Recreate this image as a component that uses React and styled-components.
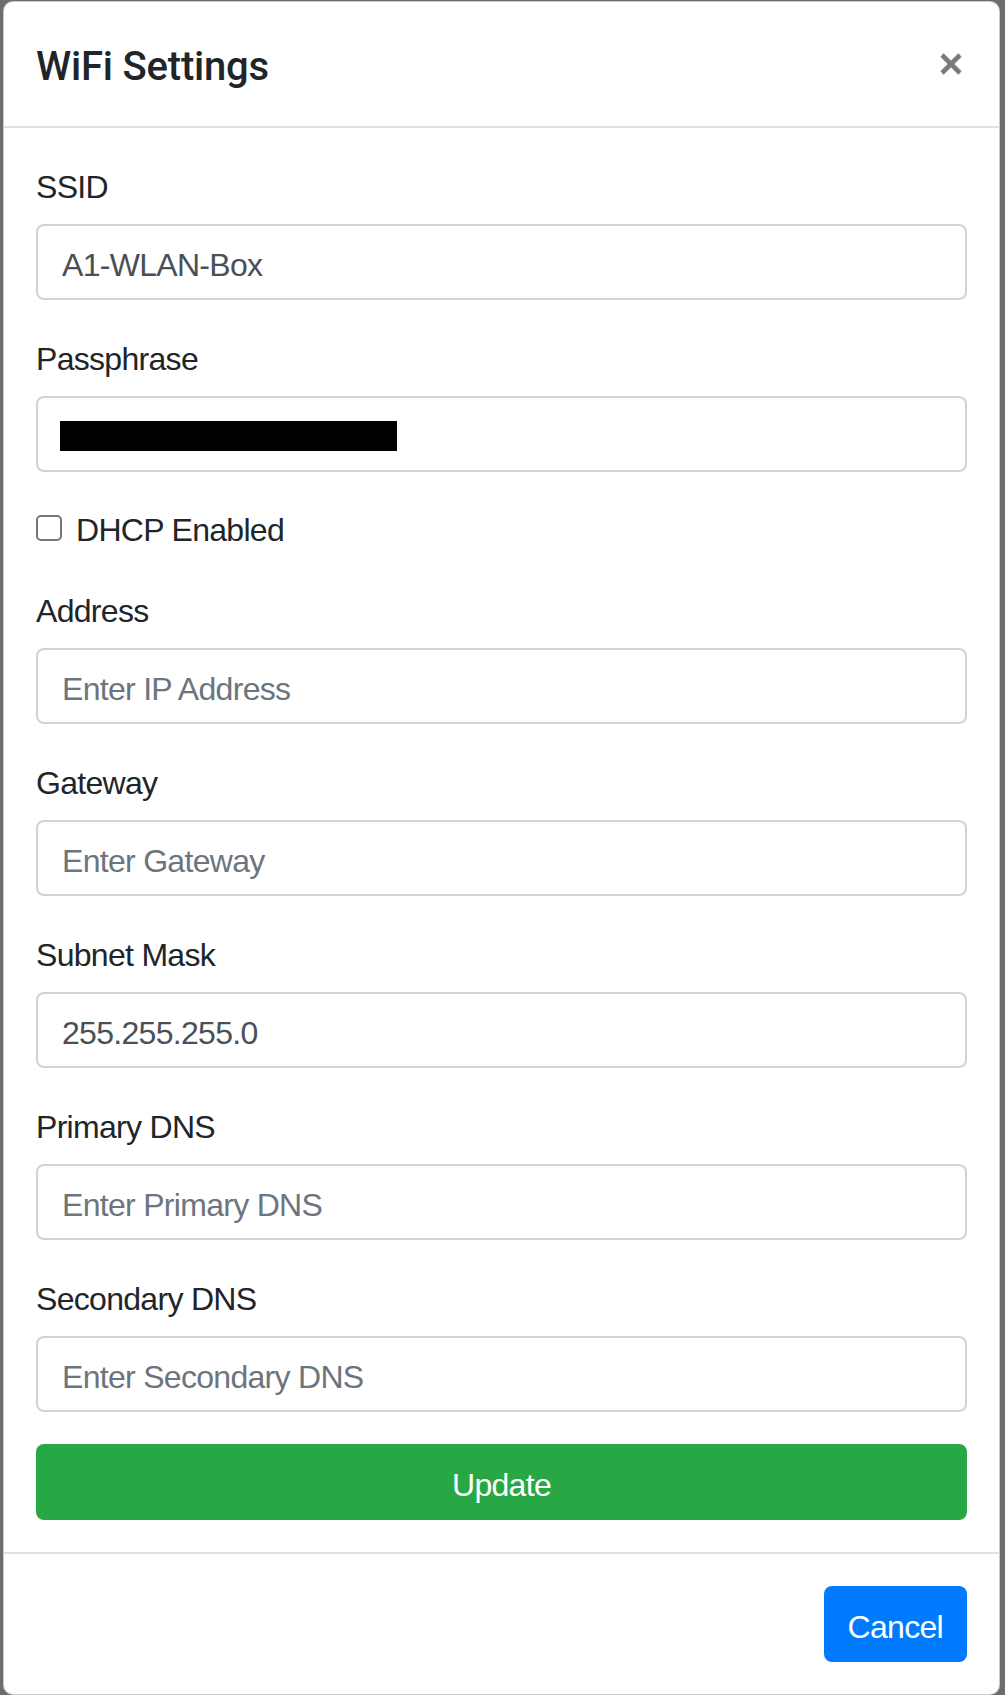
import React from 'react'
import styled, { createGlobalStyle } from 'styled-components'

const GlobalStyle = createGlobalStyle`
  html, body {
    margin: 0;
    padding: 0;
    background: #6d6d6d;
  }
  body {
    font-family: "Liberation Sans", Arial, sans-serif;
    color: #212529;
  }
  * {
    box-sizing: border-box;
  }
`

const Modal = styled.div`
  margin: 1px 0 0 3px;
  width: 997px;
  background: #ffffff;
  border: 1px solid rgba(0, 0, 0, 0.2);
  border-radius: 10px;
  display: flex;
  flex-direction: column;
`

const Header = styled.div`
  display: flex;
  align-items: center;
  justify-content: space-between;
  padding: 32px;
  border-bottom: 2px solid #dee2e6;
`

const Title = styled.h5`
  margin: 0;
  padding-top: 5px;
  height: 60px;
  font-family: Roboto, "Liberation Sans", sans-serif;
  font-size: 40px;
  line-height: 55px;
  font-weight: 500;
  letter-spacing: -0.2px;
  color: #212529;
`

const CloseButton = styled.button`
  display: flex;
  padding: 0;
  margin-right: 5px;
  border: 0;
  background: transparent;
  cursor: pointer;
`

const Body = styled.div`
  padding: 32px;
  display: flex;
  flex-direction: column;
`

const Group = styled.div`
  margin-bottom: 32px;
`

const Label = styled.label`
  display: block;
  padding-top: 3px;
  margin-bottom: 13px;
  font-size: 32px;
  line-height: 48px;
  letter-spacing: -0.7px;
  color: #212529;
`

const Input = styled.input`
  display: block;
  width: 100%;
  height: 76px;
  padding: 15px 24px 9px;
  font-family: inherit;
  font-size: 32px;
  line-height: 48px;
  letter-spacing: -0.7px;
  color: #495057;
  background: #ffffff;
  border: 2px solid #ced4da;
  border-radius: 8px;
  outline: none;

  &::placeholder {
    color: #6c757d;
    opacity: 1;
  }
`

const SecretField = styled.div`
  display: flex;
  align-items: center;
  height: 76px;
  padding: 3px 22px 0;
  border: 2px solid #ced4da;
  border-radius: 8px;
`

const Redaction = styled.span`
  display: block;
  width: 337px;
  height: 30px;
  background: #000000;
`

const CheckRow = styled.div`
  display: flex;
  align-items: center;
  gap: 14px;
  height: 48px;
  margin-bottom: 32px;
`

const Checkbox = styled.span`
  display: block;
  width: 26px;
  height: 26px;
  border: 2px solid #767676;
  border-radius: 5px;
  background: #ffffff;
`

const CheckLabel = styled.label`
  padding-top: 4px;
  font-size: 32px;
  line-height: 44px;
  letter-spacing: -0.7px;
  color: #212529;
`

const Button = styled.button`
  height: 76px;
  padding: 15px 24px 9px;
  border: 0;
  border-radius: 8px;
  font-family: inherit;
  font-size: 32px;
  line-height: 48px;
  letter-spacing: -0.7px;
  color: #ffffff;
  background: ${({ $variant }) => ($variant === 'success' ? '#28a745' : '#007bff')};
  width: ${({ $block }) => ($block ? '100%' : 'auto')};
  cursor: pointer;
`

const Footer = styled.div`
  display: flex;
  justify-content: flex-end;
  padding: 24px;
  border-top: 2px solid #dee2e6;

  & > ${Button} {
    margin: 8px;
  }
`

const fields = [
  { label: 'Address', placeholder: 'Enter IP Address' },
  { label: 'Gateway', placeholder: 'Enter Gateway' },
  { label: 'Subnet Mask', value: '255.255.255.0' },
  { label: 'Primary DNS', placeholder: 'Enter Primary DNS' },
  { label: 'Secondary DNS', placeholder: 'Enter Secondary DNS' },
]

function App() {
  return (
    <>
      <GlobalStyle />
      <Modal>
        <Header>
          <Title>WiFi Settings</Title>
          <CloseButton aria-label="Close">
            <svg width="22" height="22" viewBox="0 0 22 22">
              <path d="M2 2 L20 20 M20 2 L2 20" stroke="#7b7b7b" strokeWidth="4.6" strokeLinecap="butt" />
            </svg>
          </CloseButton>
        </Header>
        <Body>
          <Group>
            <Label>SSID</Label>
            <Input defaultValue="A1-WLAN-Box" />
          </Group>
          <Group>
            <Label>Passphrase</Label>
            <SecretField>
              <Redaction />
            </SecretField>
          </Group>
          <CheckRow>
            <Checkbox />
            <CheckLabel>DHCP Enabled</CheckLabel>
          </CheckRow>
          {fields.map((f) => (
            <Group key={f.label}>
              <Label>{f.label}</Label>
              <Input placeholder={f.placeholder} defaultValue={f.value} />
            </Group>
          ))}
          <Button $variant="success" $block>Update</Button>
        </Body>
        <Footer>
          <Button $variant="primary">Cancel</Button>
        </Footer>
      </Modal>
    </>
  )
}

export default App
